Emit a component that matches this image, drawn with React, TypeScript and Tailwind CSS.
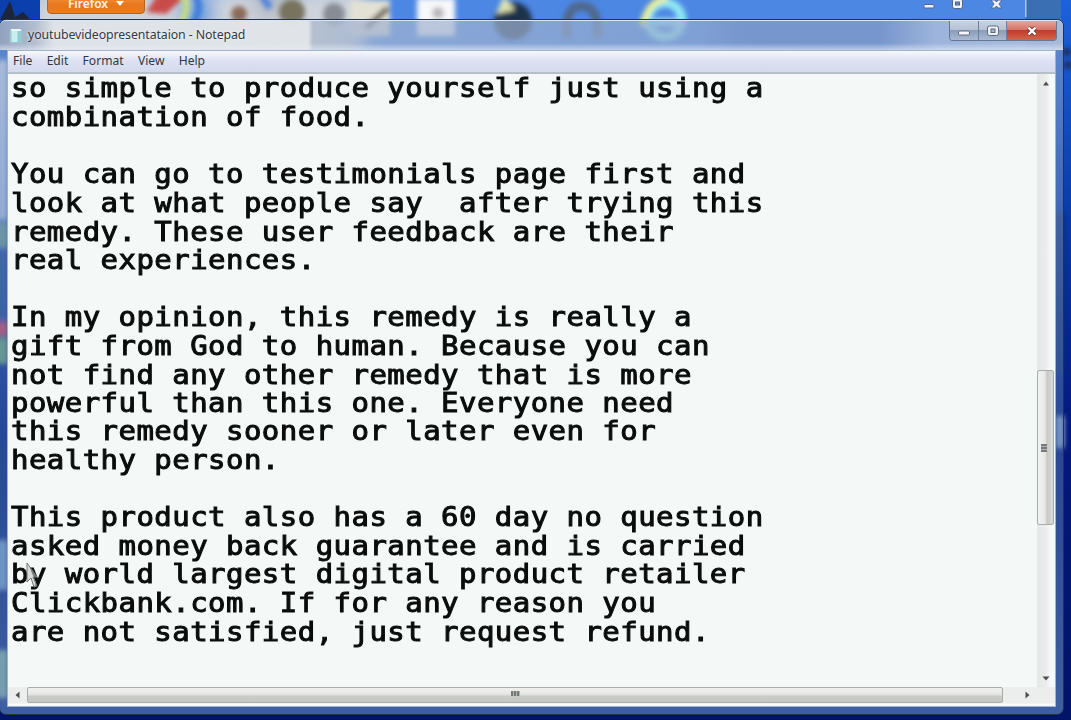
import React from 'react';

const LINES = [
  'so simple to produce yourself just using a',
  'combination of food.',
  '',
  'You can go to testimonials page first and',
  'look at what people say  after trying this',
  'remedy. These user feedback are their',
  'real experiences.',
  '',
  'In my opinion, this remedy is really a',
  'gift from God to human. Because you can',
  'not find any other remedy that is more',
  'powerful than this one. Everyone need',
  'this remedy sooner or later even for',
  'healthy person.',
  '',
  'This product also has a 60 day no question',
  'asked money back guarantee and is carried',
  'by world largest digital product retailer',
  'Clickbank.com. If for any reason you',
  'are not satisfied, just request refund.',
];

const MENU = ['File', 'Edit', 'Format', 'View', 'Help'];

// desktop icons and the browser window that show through the glass
function Wallpaper() {
  return (
    <svg className="absolute inset-0" width="1071" height="720" viewBox="0 0 1071 720">
      <defs>
        <filter id="soft" x="-30%" y="-30%" width="160%" height="160%"><feGaussianBlur stdDeviation="2.5" /></filter>
        <filter id="softer" x="-30%" y="-60%" width="160%" height="220%"><feGaussianBlur stdDeviation="8" /></filter>
        <linearGradient id="sky" x1="0" y1="0" x2="0" y2="1">
          <stop offset="0" stopColor="#1c62dc" />
          <stop offset="0.3" stopColor="#0a3aa8" />
          <stop offset="0.6" stopColor="#04187e" />
          <stop offset="1" stopColor="#021468" />
        </linearGradient>
      </defs>
      <rect width="1071" height="720" fill="url(#sky)" />
      <rect x="40" y="0" width="986" height="52" fill="#4c87e4" />
      <g filter="url(#softer)">
        <rect x="30" y="-10" width="335" height="70" fill="#cfd4dc" />
        <rect x="180" y="-4" width="34" height="34" fill="#76a5df" />
        <rect x="255" y="-10" width="30" height="30" fill="#b7bcc4" />
      </g>
      <rect x="0" y="0" width="40" height="20" fill="#0c3fae" />
      <rect x="1026" y="0" width="35" height="20" fill="#3a6fb4" />
      <rect x="1025" y="0" width="1.5" height="17" fill="#a9c7ee" />
      <g filter="url(#soft)">
        <path d="M146 12 L158 -6 L188 -6 L166 14 Z" fill="#c84c48" />
        <path d="M180 24 Q192 6 182 -6" stroke="#c9e27e" strokeWidth="6" fill="none" />
        <path d="M193 24 Q204 6 194 -6" stroke="#3c7cdc" strokeWidth="7" fill="none" />
        <path d="M262 -4 L270 8" stroke="#4f82dc" strokeWidth="7" />
        <circle cx="239" cy="14" r="8" fill="#8a6a58" />
        <circle cx="292" cy="12" r="13" fill="#77735f" />
        <circle cx="334" cy="14" r="11" fill="#898c94" />
        <rect x="350" y="0" width="40" height="36" fill="#e2e1d4" />
        <path d="M366 28 L388 8" stroke="#6f6455" strokeWidth="6" />
        <rect x="417" y="-2" width="38" height="38" fill="#f6f8fa" />
        <circle cx="438" cy="13" r="6" fill="#bcb6b6" />
        <circle cx="513" cy="21" r="19" fill="#1c304c" />
        <path d="M496 14 L504 -4 L515 10 Z" fill="#dde3b0" />
        <path d="M567 38 Q564 6 581 6 Q600 6 597 38" stroke="#4f688c" strokeWidth="9" fill="none" />
        <circle cx="665" cy="20" r="17" fill="none" stroke="#8fe8f4" strokeWidth="9" />
        <path d="M654 22 H680" stroke="#a9f0f8" strokeWidth="7" />
        <path d="M642 26 Q648 0 668 -2" stroke="#eef08e" strokeWidth="6" fill="none" />
      </g>
      <path d="M0 20 L10 1 L15 17 L23 12 L29 18 V20 Z" fill="#1c2638" />
      <g filter="url(#soft)">
        <rect x="-4" y="60" width="12" height="160" fill="#b4c6e2" />
        <rect x="-4" y="222" width="12" height="26" fill="#6a9a8a" />
        <rect x="-4" y="250" width="12" height="70" fill="#123c92" />
        <rect x="-4" y="322" width="12" height="14" fill="#e83a4c" />
        <rect x="-4" y="338" width="12" height="26" fill="#74b070" />
        <rect x="-4" y="540" width="12" height="50" fill="#9ab8d8" />
        <rect x="-4" y="650" width="12" height="48" fill="#b5dc96" />
        <rect x="1056" y="212" width="8" height="160" fill="#0a2c74" />
        <rect x="1056" y="416" width="8" height="32" fill="#a9bedc" />
      </g>
      <g filter="url(#soft)" fill="#1b2c4c">
        <circle cx="1067" cy="52" r="4" />
        <circle cx="1068" cy="65" r="4" />
      </g>
      <g stroke="#53658e" strokeWidth="1" fill="#eef3fb">
        <rect x="924" y="4.500" width="10" height="3.500" rx="1" />
        <rect x="952.500" y="-1" width="10" height="9.500" rx="2" />
        <rect x="955.500" y="2" width="4" height="3" fill="#6e86b8" />
        <path d="M991 0 h4 l1.500 2 l1.500 -2 h4 l-3 4 l3 4 h-4 l-1.500 -2 l-1.500 2 h-4 l3 -4 Z" />
      </g>
    </svg>
  );
}

function TitleBar() {
  return (
    <div className="relative h-[30px] shrink-0 flex items-start overflow-hidden rounded-t-[6px] bg-[linear-gradient(#ffffff00_22px,#e6edf6a0_29px),linear-gradient(90deg,#93a4bcee_0,#b4bfceee_36px,#e0e4e9f2_54px,#e2e6e9f2_308px,#b3bdcbb0_313px,#a2b3d070_350px,#8ba3cd60_700px,#7794cac0_740px,#7794cad0_880px,#a5b9dcd0_935px,#b7c5dcd0_1063px)] border-t border-[#dbe6f5]">
      <div className="flex items-center h-[29px] pl-[9px]">
        <svg width="14" height="16" viewBox="0 0 14 16" className="shrink-0">
          <rect x="1" y="2" width="12" height="13" rx="1" fill="#8fcbd2" stroke="#a8bcc8" />
          <rect x="2.500" y="3" width="6" height="11" fill="#c8eeee" />
          <path d="M2 2 H12" stroke="#e8f4f6" strokeWidth="2" />
        </svg>
        <span className="ml-[5px] text-[12.300px] leading-none text-[#333a44] whitespace-pre tracking-[-0.080px] [text-shadow:0_0_3px_#fff]">youtubevideopresentataion - Notepad</span>
      </div>
      <div className="ml-auto mr-[6px] flex h-[20px] rounded-b-[4px] overflow-hidden border border-t-0 border-[#657792]">
        <div className="w-[29px] border-r border-[#71809a] flex items-center justify-center bg-[linear-gradient(#c9d3e1,#b6c3d6_45%,#8b9db8_50%,#a9bad2)]">
          <svg width="14" height="12" viewBox="0 0 14 12"><rect x="1.500" y="6" width="11" height="4" rx="1" fill="#f5f7fa" stroke="#5d6b80" /></svg>
        </div>
        <div className="w-[28px] border-r border-[#71809a] flex items-center justify-center bg-[linear-gradient(#c9d3e1,#b6c3d6_45%,#8b9db8_50%,#a9bad2)]">
          <svg width="14" height="12" viewBox="0 0 14 12"><rect x="1.500" y="1" width="11" height="9.500" rx="2" fill="#eef1f5" stroke="#5d6b80" /><rect x="5" y="4" width="4" height="3.500" fill="#a7b3c4" stroke="#5d6b80" /></svg>
        </div>
        <div className="w-[49px] flex items-center justify-center bg-[linear-gradient(#e5a597,#d7766a_45%,#c23a2b_50%,#d2654b)]">
          <svg width="12" height="10" viewBox="0 0 12 10"><path d="M2.500 1.500 L9.500 8.500 M9.500 1.500 L2.500 8.500" stroke="#7b3434" strokeWidth="4" /><path d="M2.500 1.500 L9.500 8.500 M9.500 1.500 L2.500 8.500" stroke="#fff" strokeWidth="2.400" /></svg>
        </div>
      </div>
    </div>
  );
}

function VerticalScroll() {
  return (
    <div className="w-[18px] shrink-0 flex flex-col items-center bg-[linear-gradient(90deg,#e6e8e7,#ebedec_9px,#f4f9fa_13px)]">
      <svg width="8" height="5" viewBox="0 0 8 5" className="mt-[7px]"><path d="M4 0.500 L7 4.500 H1 Z" fill="#4b4f50" /></svg>
      <div className="mt-[284px] h-[155px] w-[17px] mr-px rounded-[2px] border border-[#a9acac] bg-[linear-gradient(90deg,#f2f3f2,#e8e9e7_45%,#c8cac6_60%,#d9dbda)] flex items-center justify-center">
        <div className="w-[6px] h-[8px] mr-[3px] bg-[repeating-linear-gradient(#777a7b_0_2px,#b0b3b2_2px_3px)]" />
      </div>
      <svg width="8" height="5" viewBox="0 0 8 5" className="mt-auto mb-[6px]"><path d="M4 4.500 L7.500 0.500 H0.500 Z" fill="#4b4f50" /></svg>
    </div>
  );
}

function HorizontalScroll() {
  return (
    <div className="h-[19px] pb-[3px] shrink-0 flex items-center bg-[linear-gradient(#eceeed_16px,#f6fafa_17px)]">
      <svg width="5" height="8" viewBox="0 0 5 8" className="ml-[7px]"><path d="M0.500 4 L4.500 0.500 V7.500 Z" fill="#4b4f50" /></svg>
      <div className="ml-[7px] w-[976px] h-[16px] rounded-[2px] border border-[#a9acac] bg-[linear-gradient(#f0f1ef,#e5e6e3_45%,#c9cbc6_60%,#c4c7c1)] flex items-center justify-center">
        <div className="w-[9px] h-[5px] mb-[3px] bg-[repeating-linear-gradient(90deg,#777a7b_0_2px,#b0b3b2_2px_3px)]" />
      </div>
      <svg width="5" height="8" viewBox="0 0 5 8" className="ml-[22px]"><path d="M4.500 4 L0.500 0.500 V7.500 Z" fill="#4b4f50" /></svg>
    </div>
  );
}

export default function App() {
  return (
    <div className="relative w-[1071px] h-[720px] overflow-hidden bg-[#03197c] font-['Noto_Sans',sans-serif]">
      <Wallpaper />
      <div className="absolute left-[47px] top-[-8px] w-[98px] h-[22px] rounded-b-[4px] border border-[#b9631c] bg-[linear-gradient(#f5a04a,#e8761c_60%,#e97d20)] flex items-center justify-center gap-[8px] text-[#fff3e4] text-[12px] font-semibold leading-none">
        <span className="pt-[2px]">Firefox</span>
        <svg width="8" height="5" viewBox="0 0 8 5"><path d="M0 0 H8 L4 5 Z" fill="#fff" /></svg>
      </div>

      <div className="absolute left-[-1px] top-[19px] w-[1065px] h-[696px] rounded-[7px] border border-[#24324e] flex flex-col bg-[linear-gradient(#a7b7d180,#7f9cc880_20%,#4a74b080_60%,#5a80bcb0)]">
        <TitleBar />
        <div className="mx-[7px] mb-[7px] flex-1 min-h-0 flex flex-col border border-[#9fb3cc] bg-[#f4f8f6]">
          <div className="h-[23px] shrink-0 flex items-center gap-[14.300px] pl-[5px] pb-px border-b-2 border-[#b4bfca] bg-[linear-gradient(#f6f8fc,#dfe2f3_45%,#d4daee)] text-[12.100px] leading-none text-[#33363e]">
            {MENU.map(m => <span key={m}>{m}</span>)}
          </div>
          <div className="flex-1 min-h-0 flex">
            <div className="flex-1 min-w-0 overflow-hidden">
              {/* squat, wide console face */}
              <div className="pt-px pl-[3px] origin-top scale-y-[0.9] font-['DejaVu_Sans_Mono',monospace] text-[29px] leading-[31.780px] tracking-[0.460px] text-[#0b0d0d] [-webkit-text-stroke:1.1px_#0b0d0d]">
                {LINES.map((line, i) => (
                  <div key={i} className="h-[31.780px] whitespace-pre">{line}</div>
                ))}
              </div>
            </div>
            <VerticalScroll />
          </div>
          <HorizontalScroll />
        </div>
      </div>

      {/* mouse pointer */}
      <svg className="absolute left-[23px] top-[562px]" width="16" height="28" viewBox="0 0 16 28">
        <path d="M4 1 V20 L8 16 L11 25 L14 24 L10 15 H14 Z" fill="#c5c8c8" fillOpacity="0.6" stroke="#777" strokeWidth="1" />
      </svg>
    </div>
  );
}
